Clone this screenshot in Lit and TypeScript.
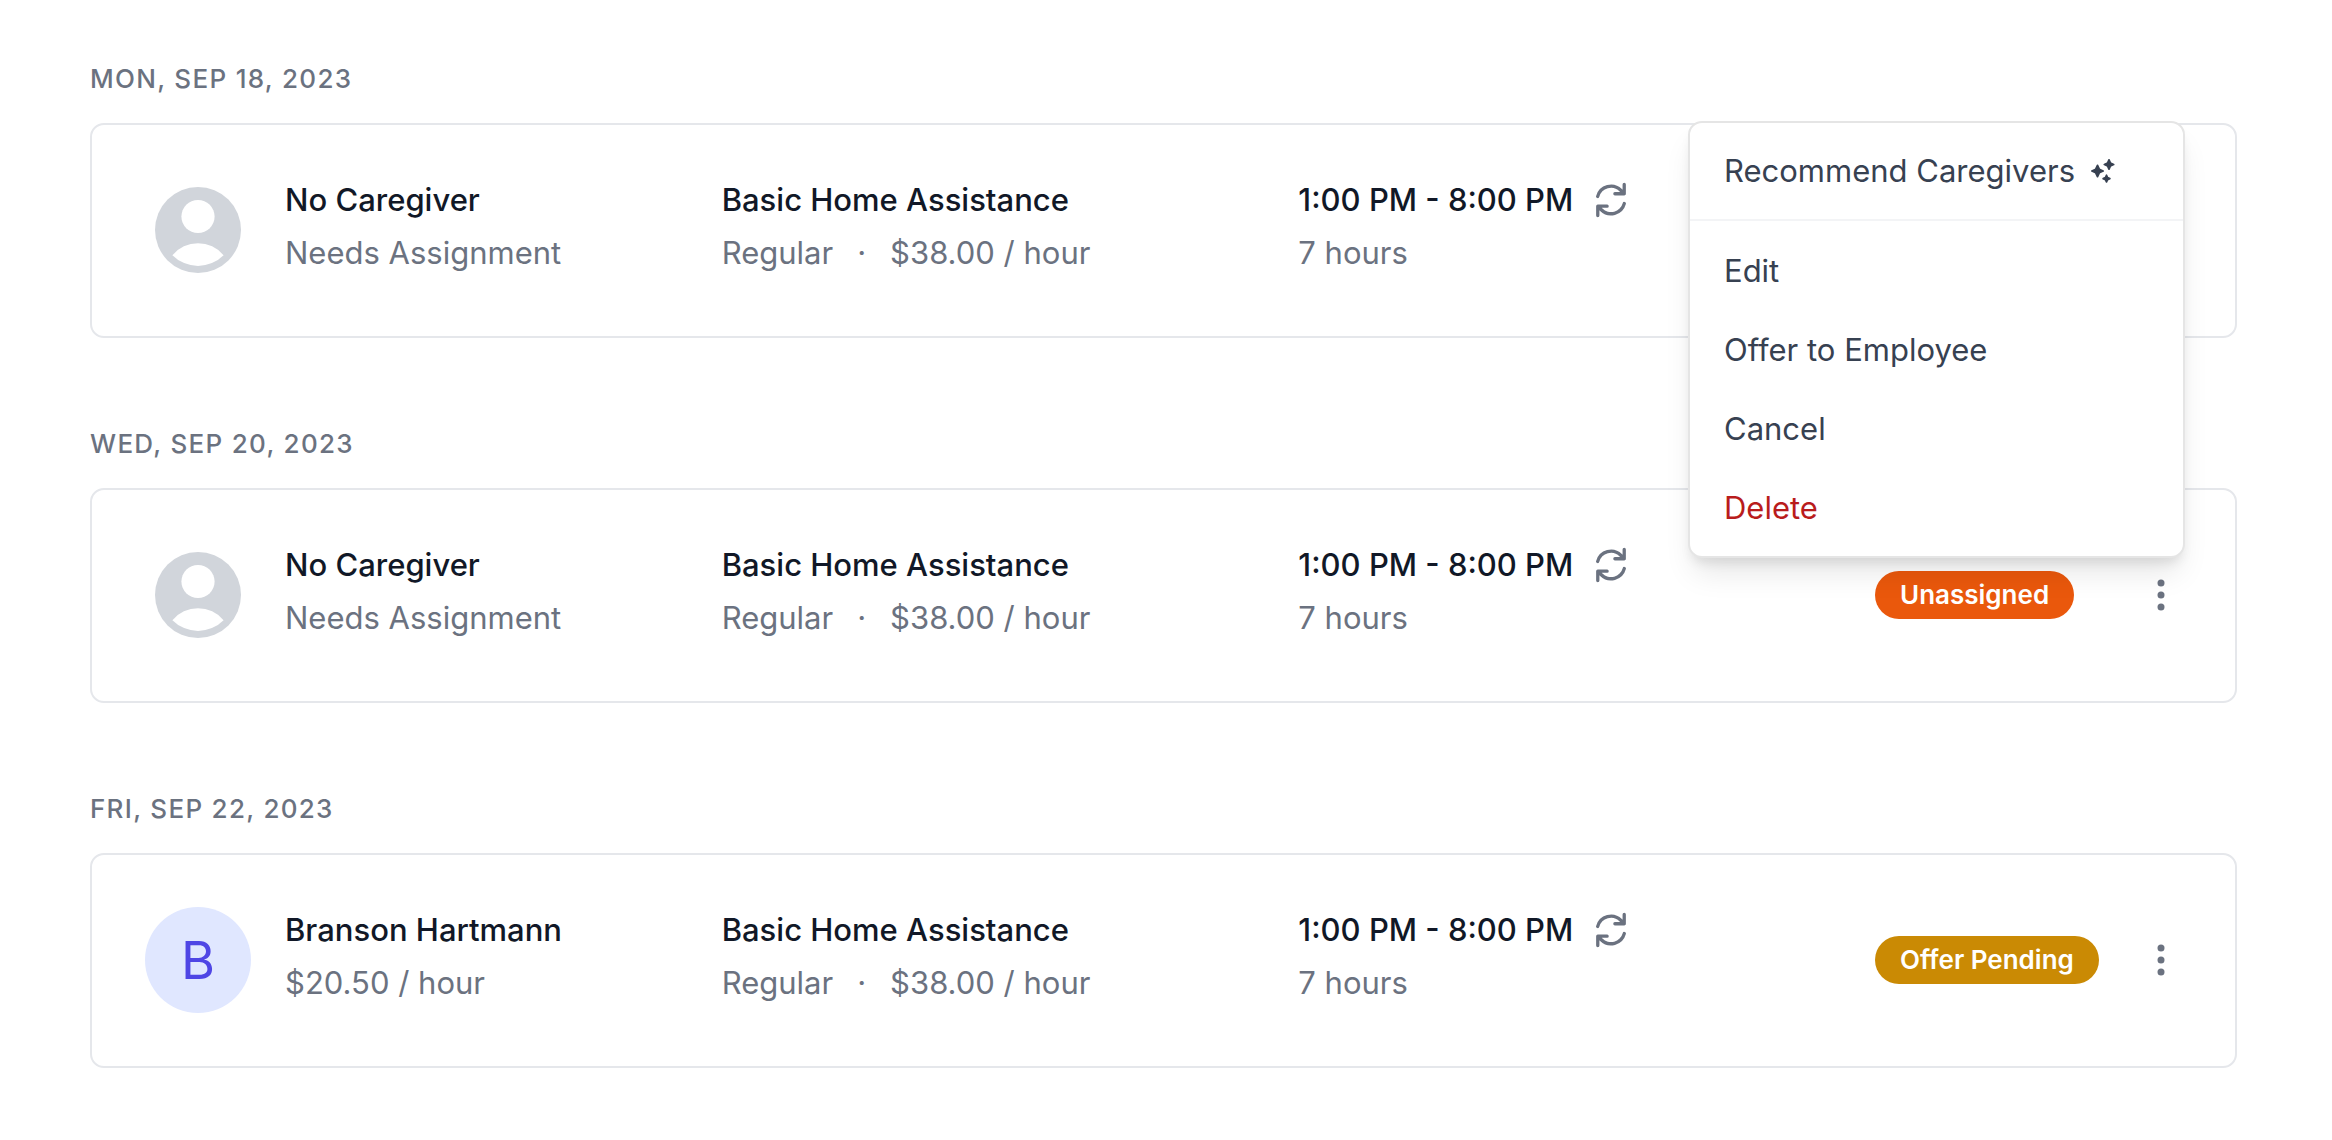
import { LitElement, html, css, svg, nothing } from "lit";
import { customElement, property, state } from "lit/decorators.js";
import { classMap } from "lit/directives/class-map.js";

interface Shift {
  date: string;
  name: string;
  detail: string;
  initial?: string;
  status?: string;
  tone?: "orange" | "amber";
}

const shifts: Shift[] = [
  { date: "Mon, Sep 18, 2023", name: "No Caregiver", detail: "Needs Assignment" },
  {
    date: "Wed, Sep 20, 2023",
    name: "No Caregiver",
    detail: "Needs Assignment",
    status: "Unassigned",
    tone: "orange",
  },
  {
    date: "Fri, Sep 22, 2023",
    name: "Branson Hartmann",
    detail: "$20.50 / hour",
    initial: "B",
    status: "Offer Pending",
    tone: "amber",
  },
];

const star = (cx: number, cy: number, r: number) => {
  const k = r * 0.32;
  return svg`<path d="M${cx} ${cy - r}L${cx + k} ${cy - k}L${cx + r} ${cy}L${cx + k} ${cy + k}L${cx} ${cy + r}L${cx - k} ${cy + k}L${cx - r} ${cy}L${cx - k} ${cy - k}Z" />`;
};

const sparkles = html`<svg class="sparkles" viewBox="0 0 24 24" aria-hidden="true">
  ${star(6.5, 12, 5.6)}${star(18, 5.5, 4.6)}${star(15.5, 19.6, 3.3)}
</svg>`;

const person = html`<svg class="person" viewBox="0 0 86 86" aria-hidden="true">
  <circle cx="43" cy="43" r="43" fill="#d1d5db" />
  <circle cx="43" cy="29.5" r="16.6" fill="#fff" />
  <path d="M17.4 68.2A33.3 33.3 0 0 1 68.6 68.2A36 36 0 0 1 17.4 68.2Z" fill="#fff" />
</svg>`;

const repeat = html`<svg class="repeat" viewBox="0 0 20 20" aria-hidden="true">
  <path
    d="M15.312 11.424a5.5 5.5 0 01-9.201 2.466l-.312-.311h2.433a.75.75 0 000-1.5H3.989a.75.75 0 00-.75.75v4.242a.75.75 0 001.5 0v-2.43l.31.31a7 7 0 0011.712-3.138.75.75 0 00-1.449-.39zm1.23-3.723a.75.75 0 00.219-.53V2.929a.75.75 0 00-1.5 0V5.36l-.31-.31A7 7 0 003.239 8.188a.75.75 0 101.448.389A5.5 5.5 0 0113.89 6.11l.311.31h-2.432a.75.75 0 000 1.5h4.243a.75.75 0 00.53-.219z"
  />
</svg>`;

const dots = html`<svg class="dots" viewBox="0 0 44 44" aria-hidden="true">
  <circle cx="22" cy="10" r="3.5" /><circle cx="22" cy="22" r="3.5" /><circle cx="22" cy="34" r="3.5" />
</svg>`;

@customElement("shift-menu")
export class ShiftMenu extends LitElement {
  static styles = css`
    :host {
      display: block;
      box-sizing: border-box;
      border: 2px solid #e5e5e5;
      border-radius: 14px;
      background: #fff;
      box-shadow:
        0 20px 30px -6px rgba(0, 0, 0, 0.1),
        0 8px 12px -4px rgba(0, 0, 0, 0.1);
    }
    .section {
      display: flex;
      flex-direction: column;
      padding: 10px 0 9px;
    }
    .lead {
      padding: 8px 0 9px;
      border-bottom: 2px solid #f3f4f6;
    }
    .item {
      display: flex;
      align-items: center;
      gap: 16px;
      padding: 17px 34px;
      border: 0;
      background: none;
      color: #374151;
      font: 400 31px/45px Inter, sans-serif;
      text-align: left;
      white-space: nowrap;
      cursor: pointer;
    }
    .danger {
      color: #b91c1c;
    }
    .sparkles {
      width: 24px;
      height: 24px;
      fill: #374151;
      stroke: #374151;
      stroke-width: 1.8;
      stroke-linejoin: round;
    }
  `;

  render() {
    return html`
      <div class="section lead">
        <button class="item">Recommend Caregivers ${sparkles}</button>
      </div>
      <div class="section">
        <button class="item">Edit</button>
        <button class="item">Offer to Employee</button>
        <button class="item">Cancel</button>
        <button class="item danger">Delete</button>
      </div>
    `;
  }
}

@customElement("shift-card")
export class ShiftCard extends LitElement {
  @property({ attribute: false }) shift!: Shift;
  @property({ type: Boolean }) open = false;

  static styles = css`
    :host {
      display: block;
    }
    .card {
      position: relative;
      display: grid;
      grid-template-columns: repeat(3, minmax(0, 1fr)) 308px;
      padding: 52px 52px 53px 53px;
      border: 2px solid #e5e7eb;
      border-radius: 14px;
      font-size: 31px;
      line-height: 45px;
      color: #6b7280;
      white-space: nowrap;
    }
    .caregiver {
      display: flex;
      gap: 34px;
    }
    .avatar {
      display: flex;
      flex: none;
      align-items: center;
      justify-content: center;
      width: 106px;
      height: 106px;
      border-radius: 50%;
      color: #4f46e5;
      font-size: 52px;
    }
    .filled {
      background: #e0e7ff;
    }
    .person {
      width: 86px;
      height: 86px;
    }
    .stack {
      display: flex;
      flex-direction: column;
      gap: 8px;
    }
    .title {
      display: flex;
      align-items: center;
      gap: 16px;
      height: 45px;
      color: #111827;
      font-weight: 500;
    }
    .meta {
      display: flex;
      gap: 24px;
    }
    .repeat {
      width: 44px;
      height: 44px;
      fill: #6b7280;
    }
    .actions {
      display: flex;
      align-items: center;
    }
    .badge {
      padding: 6px 25px;
      border-radius: 24px;
      color: #fff;
      font-size: 26px;
      font-weight: 600;
      line-height: 36px;
    }
    .orange {
      background: #ea580c;
    }
    .amber {
      background: #ca8a04;
    }
    .more {
      margin-left: auto;
      padding: 0;
      border: 0;
      background: none;
      cursor: pointer;
    }
    .dots {
      display: block;
      width: 44px;
      height: 44px;
      fill: #6b7280;
    }
    .menu {
      position: absolute;
      z-index: 10;
      top: -4px;
      right: 50px;
      width: 497px;
    }
  `;

  private toggle() {
    this.dispatchEvent(new CustomEvent("toggle-menu"));
  }

  render() {
    const s = this.shift;
    return html`
      <article class="card">
        <div class="caregiver">
          <div class=${classMap({ avatar: true, filled: !!s.initial })}>${s.initial ?? person}</div>
          <div class="stack">
            <div class="title">${s.name}</div>
            <div>${s.detail}</div>
          </div>
        </div>
        <div class="stack">
          <div class="title">Basic Home Assistance</div>
          <div class="meta"><span>Regular</span><span>·</span><span>$38.00 / hour</span></div>
        </div>
        <div class="stack">
          <div class="title">1:00 PM - 8:00 PM ${repeat}</div>
          <div>7 hours</div>
        </div>
        <div class="actions">
          ${s.status
            ? html`<span class=${classMap({ badge: true, [s.tone ?? "orange"]: true })}>${s.status}</span>`
            : nothing}
          <button class="more" aria-label="More" aria-expanded=${this.open ? "true" : "false"} @click=${this.toggle}>
            ${dots}
          </button>
        </div>
        ${this.open ? html`<shift-menu class="menu"></shift-menu>` : nothing}
      </article>
    `;
  }
}

@customElement("app-root")
export class AppRoot extends LitElement {
  @state() private openIndex = 0;

  static styles = css`
    :host {
      display: block;
      font-family: Inter, sans-serif;
    }
    .schedule {
      display: flex;
      flex-direction: column;
      gap: 87px;
      padding: 60px 95px 72px 90px;
    }
    .day {
      display: flex;
      flex-direction: column;
      gap: 26px;
    }
    .date {
      margin: 0;
      color: #6b7280;
      font-size: 26px;
      font-weight: 500;
      line-height: 37px;
      letter-spacing: 0.05em;
      text-transform: uppercase;
    }
  `;

  render() {
    return html`
      <main class="schedule">
        ${shifts.map(
          (s, i) => html`
            <section class="day">
              <h2 class="date">${s.date}</h2>
              <shift-card
                .shift=${s}
                .open=${this.openIndex === i}
                @toggle-menu=${() => (this.openIndex = this.openIndex === i ? -1 : i)}
              ></shift-card>
            </section>
          `,
        )}
      </main>
    `;
  }
}
